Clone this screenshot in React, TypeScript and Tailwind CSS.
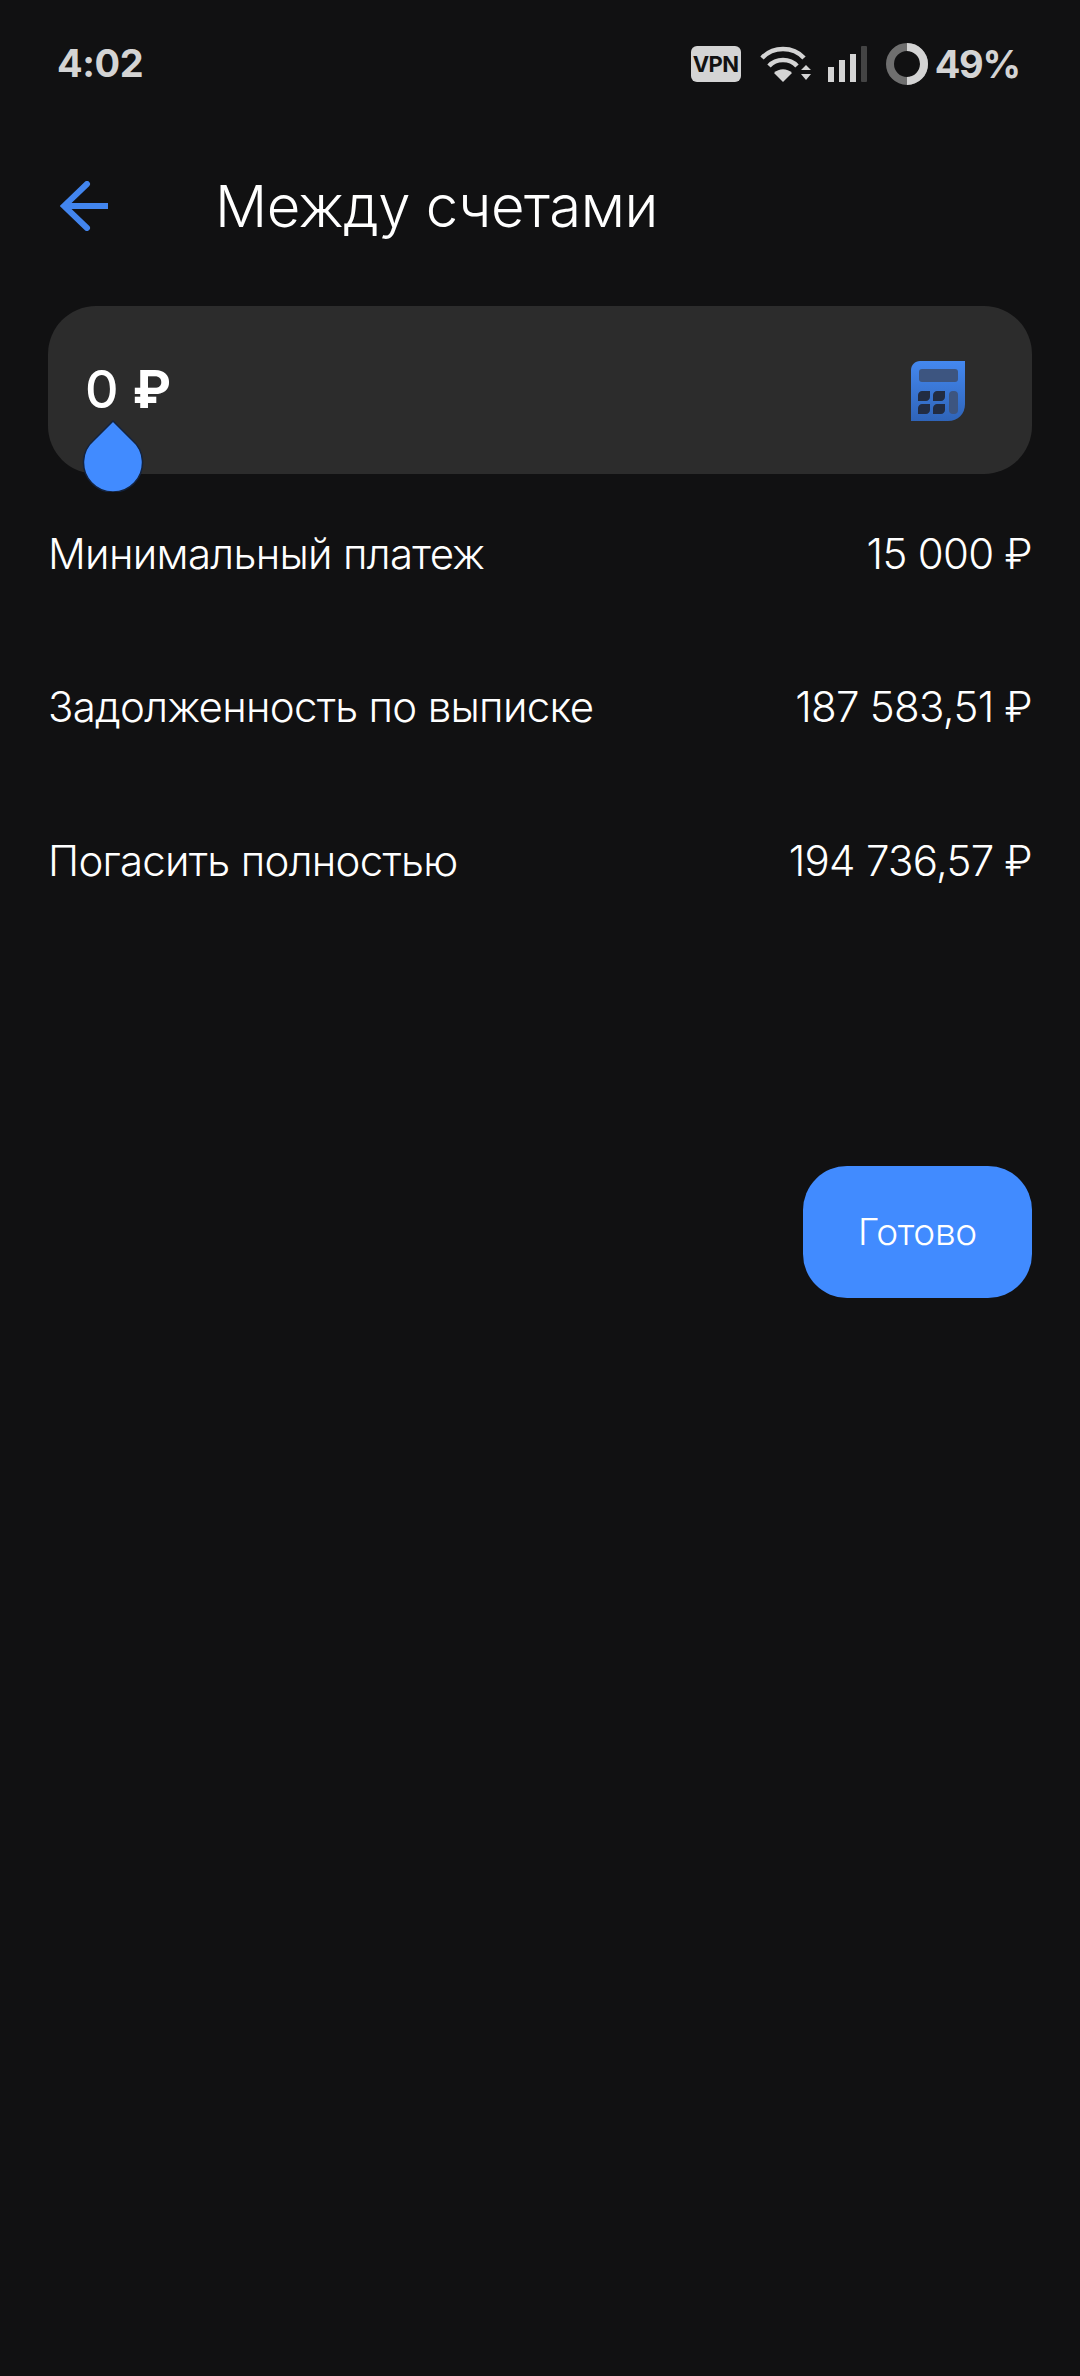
import React from 'react';

const rows = [
  { label: 'Минимальный платеж', value: '15 000 ₽' },
  { label: 'Задолженность по выписке', value: '187 583,51 ₽' },
  { label: 'Погасить полностью', value: '194 736,57 ₽' },
];

function StatusIcons() {
  return (
    <div className="flex items-center mt-[2px]">
      <div className="w-[50px] h-[36px] rounded-[6px] bg-[#d4d4d4] flex items-center justify-center text-[#111] text-[22px] font-bold tracking-[-0.5px]">
        VPN
      </div>
      {/* wifi with up/down arrows */}
      <svg width="51" height="36" viewBox="0 0 51 36" className="ml-[19px]">
        <g fill="none" stroke="#d4d4d4" strokeWidth="4.5">
          <path d="M2 12 C13 0 33 0 44 12" />
          <path d="M9 20 C16 12 30 12 37 20" />
        </g>
        <path d="M14 27 C19 22 27 22 32 27 L23 36 Z" fill="#d4d4d4" />
        <path d="M41 24 L46 19 L51 24 Z M41 28 L51 28 L46 34 Z" fill="#d4d4d4" />
      </svg>
      {/* signal bars */}
      <svg width="39" height="36" viewBox="0 0 39 36" className="ml-[17px]">
        <rect x="0" y="21" width="6" height="15" fill="#d4d4d4" />
        <rect x="11" y="14" width="6" height="22" fill="#d4d4d4" />
        <rect x="22" y="8" width="6" height="28" fill="#d4d4d4" />
        <rect x="33" y="0" width="6" height="36" rx="1" fill="#444" />
      </svg>
      {/* battery ring */}
      <svg width="42" height="42" viewBox="0 0 42 42" className="ml-[19px]">
        <circle cx="21" cy="21" r="17" fill="none" stroke="#6f6f6f" strokeWidth="8" />
        <path d="M21 4 A17 17 0 0 1 21 38" fill="none" stroke="#d4d4d4" strokeWidth="8" />
      </svg>
      <span className="ml-[7px] text-[38px] font-bold tracking-[-1.2px] text-[#d4d4d4] leading-none">49%</span>
    </div>
  );
}

function CalculatorIcon() {
  return (
    <svg width="56" height="62" viewBox="0 0 56 62" className="mt-[2px]">
      <defs>
        <linearGradient id="calc" x1="0" y1="0" x2="0" y2="1">
          <stop offset="0" stopColor="#4488f0" />
          <stop offset="1" stopColor="#2f64b8" />
        </linearGradient>
      </defs>
      <path d="M10 1 H55 V44 C55 54 48 61 38 61 H1 V10 C1 5 5 1 10 1 Z" fill="url(#calc)" />
      <rect x="9" y="9" width="39" height="13" rx="3" fill="#3d5580" />
      <path d="M12 31 H20 V37 C20 39 18 41 16 41 H8 V35 C8 33 10 31 12 31 Z" fill="#222c42" />
      <path d="M27 31 H35 V37 C35 39 33 41 31 41 H23 V35 C23 33 25 31 27 31 Z" fill="#222c42" />
      <path d="M12 44 H20 V50 C20 52 18 54 16 54 H8 V48 C8 46 10 44 12 44 Z" fill="#222c42" />
      <path d="M27 44 H35 V50 C35 52 33 54 31 54 H23 V48 C23 46 25 44 27 44 Z" fill="#222c42" />
      <rect x="39" y="31" width="9" height="23" rx="4" fill="#3d5580" />
    </svg>
  );
}

export default function App() {
  return (
    <div className="w-[1080px] h-[2376px] bg-[#111112] text-white font-['Inter',sans-serif] overflow-hidden">
      <div className="flex items-center justify-between pl-[57px] pr-[60px] pt-[42px] h-[84px]">
        <span className="text-[38px] font-bold tracking-[-0.4px] text-[#d4d4d4] leading-none">4:02</span>
        <StatusIcons />
      </div>

      <div className="flex items-center pl-[60px] mt-[79px] h-[86px]">
        <svg width="50" height="50" viewBox="0 0 50 50" fill="none" stroke="#4285ee" strokeWidth="6" strokeLinecap="round">
          <path d="M48 25 H4" strokeLinecap="butt" />
          <path d="M27 3 L4 25 L27 47" />
        </svg>
        <h1 className="ml-[105px] text-[58px] font-light tracking-[-0.5px] leading-none">Между счетами</h1>
      </div>

      <div className="mx-[48px] mt-[57px] h-[168px] rounded-[48px] bg-[#2c2c2c] relative flex items-center justify-between pl-[37px] pr-[66px]">
        <span className="text-[52px] font-medium leading-none">
          0 <span className="font-bold">₽</span>
        </span>
        <CalculatorIcon />
        {/* text cursor handle */}
        <svg width="62" height="72" viewBox="0 0 62 72" className="absolute left-[34px] top-[114px]">
          <path d="M31 1 L50 20 A29.5 29.5 0 1 1 12 20 Z" fill="#418bff" stroke="#13233f" strokeWidth="1.5" />
        </svg>
      </div>

      <div className="mx-[48px] mt-[28px]">
        {rows.map((row) => (
          <div key={row.label} className="flex items-center justify-between h-[102px] mb-[51.5px] text-[42px] font-light tracking-[-0.7px]">
            <span>{row.label}</span>
            <span>{row.value}</span>
          </div>
        ))}
      </div>

      <div className="flex justify-end mx-[48px] mt-[255px]">
        <button className="w-[229px] h-[132px] rounded-[44px] bg-[#418bff] text-[37px] font-light tracking-[-0.3px] text-white">
          Готово
        </button>
      </div>
    </div>
  );
}
